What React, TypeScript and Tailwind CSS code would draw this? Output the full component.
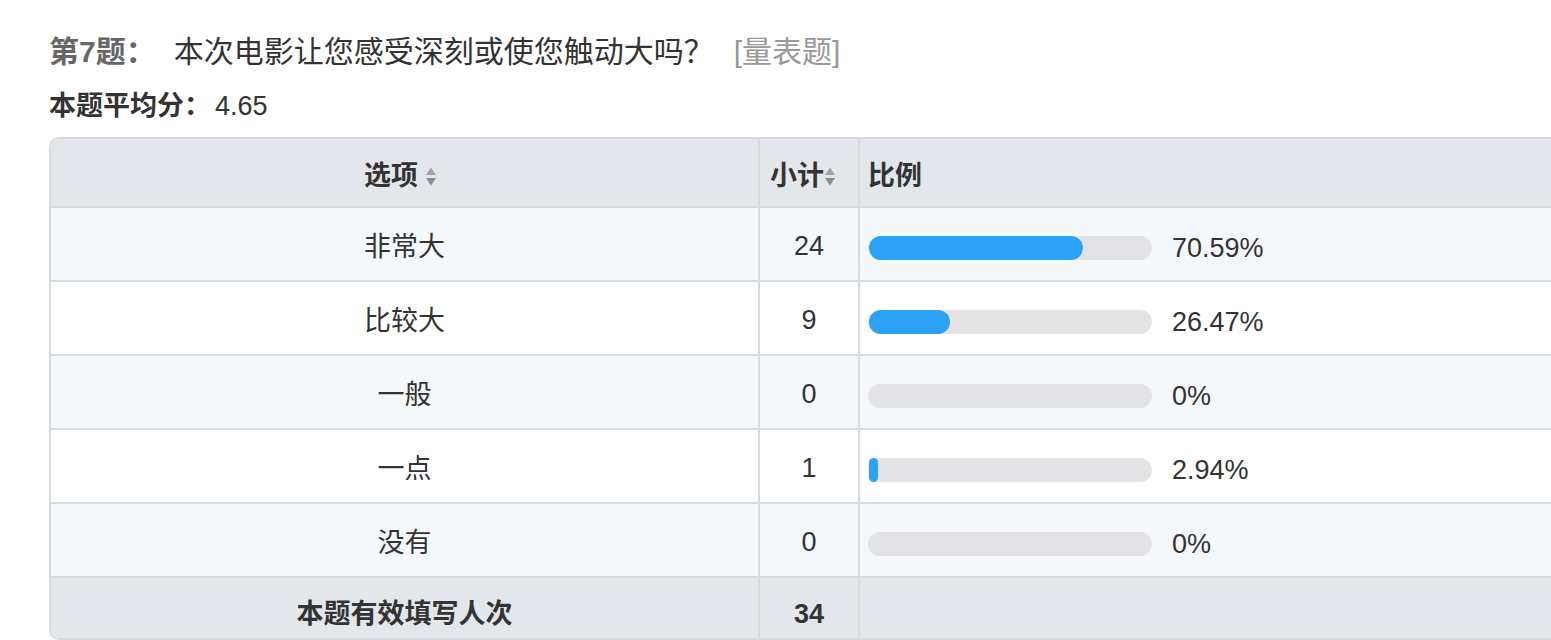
import React from "react";

type Row = {
  label: string;
  count: number;
  pct: string;
  fill: number;
};

const rows: Row[] = [
  { label: "非常大", count: 24, pct: "70.59%", fill: 214 },
  { label: "比较大", count: 9, pct: "26.47%", fill: 81 },
  { label: "一般", count: 0, pct: "0%", fill: 0 },
  { label: "一点", count: 1, pct: "2.94%", fill: 9 },
  { label: "没有", count: 0, pct: "0%", fill: 0 },
];

const font = "font-['Liberation_Sans','Noto_Sans_CJK_SC',sans-serif]";

function SortIcon() {
  return (
    <svg width="12" height="21" viewBox="0 0 12 21" className="shrink-0">
      <path d="M6 1.5 L11 9 H1 Z" fill="#a3a3a3" />
      <path d="M6 19.5 L11 12 H1 Z" fill="#8c8c8c" />
    </svg>
  );
}

function Bar({ fill }: { fill: number }) {
  return (
    <div className="flex h-[24px] w-[284px] rounded-full bg-[#e3e3e5] pl-[1px]">
      {fill > 0 && (
        <div className="h-full rounded-full bg-[#2ca2f7]" style={{ width: fill }} />
      )}
    </div>
  );
}

export default function App() {
  return (
    <div className={`w-full h-[640px] overflow-hidden bg-white text-[#333] ${font}`}>
      <div className="pl-[49px] pt-[32px]">
        {/* 题目 */}
        <div className="flex items-center h-[40px] text-[30px] leading-[40px] whitespace-nowrap">
          <span className="font-bold text-[#666]">第7题：</span>
          <span className="ml-[18px]">本次电影让您感受深刻或使您触动大吗？</span>
          <span className="ml-[20px] text-[#999]">[量表题]</span>
        </div>

        <div className="mt-[16px] h-[36px] flex items-center text-[27px] leading-[36px] whitespace-nowrap">
          <span className="font-bold">本题平均分：</span>
          <span className="ml-[4px]">4.65</span>
        </div>

        {/* 统计表 */}
        <div className="mt-[13px] w-[1600px] border-2 border-[#d9dadd] rounded-[10px] overflow-hidden text-[27px]">
          <div className="grid grid-cols-[709px_100px_1fr] h-[69px] bg-[#e3e6eb] border-b-2 border-[#d9dadd] font-bold">
            <div className="flex items-center justify-center gap-[7px] pt-[8px] border-r-2 border-[#d9dadd] pr-[8px]">
              <span>选项</span>
              <SortIcon />
            </div>
            <div className="flex items-center justify-center pt-[8px] border-r-2 border-[#d9dadd] pr-[12px]">
              <span>小计</span>
              <SortIcon />
            </div>
            <div className="flex items-center pl-[8px] pt-[8px]">比例</div>
          </div>

          {rows.map((r, i) => (
            <div
              key={r.label}
              className={`grid grid-cols-[709px_100px_1fr] h-[74px] border-b-2 border-[#d9dadd] ${
                i % 2 === 0 ? "bg-[#f5f8fb]" : "bg-white"
              }`}
            >
              <div className="flex items-center justify-center pt-[6px] border-r-2 border-[#d9dadd]">
                {r.label}
              </div>
              <div className="flex items-center justify-center pt-[4px] border-r-2 border-[#d9dadd]">
                {r.count}
              </div>
              <div className="flex items-center pl-[8px] pt-[8px] gap-[20px]">
                <Bar fill={r.fill} />
                <span>{r.pct}</span>
              </div>
            </div>
          ))}

          <div className="grid grid-cols-[709px_100px_1fr] h-[60px] bg-[#e3e6eb] font-bold">
            <div className="flex items-center justify-center pt-[12px] border-r-2 border-[#d9dadd]">
              本题有效填写人次
            </div>
            <div className="flex items-center justify-center pt-[12px] border-r-2 border-[#d9dadd]">
              34
            </div>
            <div />
          </div>
        </div>
      </div>
    </div>
  );
}
